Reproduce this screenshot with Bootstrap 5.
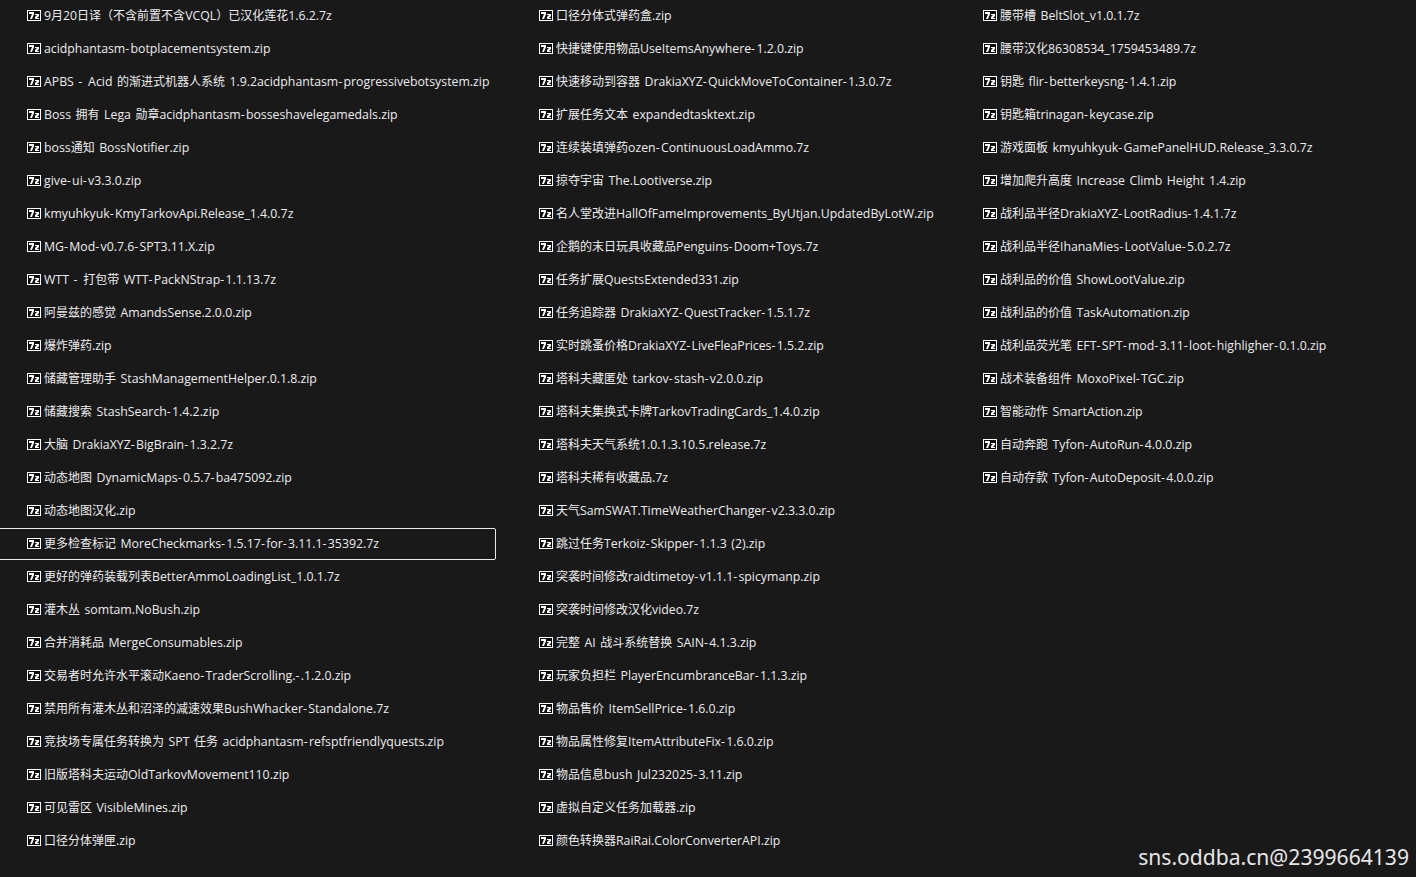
<!DOCTYPE html>
<html lang="zh-CN">
<head>
    <meta charset="UTF-8">
    <title>mods</title>
    <link href="https://cdn.jsdelivr.net/npm/bootstrap@5.3.0/dist/css/bootstrap.min.css" rel="stylesheet">
    <style>
        body{background:#191919;height:877px;overflow:hidden;font-family:"Open Sans","Noto Sans CJK SC",sans-serif;font-size:12.3px;color:#ededed;}
        .file-col-1{width:512px;}
        .file-col-2{width:444px;}
        .file-col-3{width:460px;}
        .file-row{height:33px;padding-left:27px;gap:3px;white-space:nowrap;line-height:1;word-spacing:1.3px;}
        .file-row.sel{margin:0 16px 1px -2px;height:32px;padding:1px 0 0 29px;outline:1px solid #e8e8e8;outline-offset:-1px;border-radius:2px;}
        .cjk-run{font-size:12px;}
        .dash-run{letter-spacing:1.3px;}
        .zip-ico{width:14px;height:11px;flex:none;margin-bottom:2px;}
        .file-row.sel .zip-ico{margin-bottom:3px;}
        .watermark{right:7px;bottom:7px;font-size:21.1px;line-height:1.3;font-family:"Noto Sans",sans-serif;color:#e6e6e6;}
    </style>
</head>
<body class="position-relative">
    <div class="d-flex" id="cols"></div>
    <div class="position-absolute watermark">sns.oddba.cn@2399664139</div>
    <script>
        var c1=["9月20日译（不含前置不含VCQL）已汉化莲花1.6.2.7z","acidphantasm-botplacementsystem.zip","APBS - Acid 的渐进式机器人系统 1.9.2acidphantasm-progressivebotsystem.zip","Boss 拥有 Lega 勋章acidphantasm-bosseshavelegamedals.zip","boss通知 BossNotifier.zip","give-ui-v3.3.0.zip","kmyuhkyuk-KmyTarkovApi.Release_1.4.0.7z","MG-Mod-v0.7.6-SPT3.11.X.zip","WTT - 打包带 WTT-PackNStrap-1.1.13.7z","阿曼兹的感觉 AmandsSense.2.0.0.zip","爆炸弹药.zip","储藏管理助手 StashManagementHelper.0.1.8.zip","储藏搜索 StashSearch-1.4.2.zip","大脑 DrakiaXYZ-BigBrain-1.3.2.7z","动态地图 DynamicMaps-0.5.7-ba475092.zip","动态地图汉化.zip","更多检查标记 MoreCheckmarks-1.5.17-for-3.11.1-35392.7z","更好的弹药装载列表BetterAmmoLoadingList_1.0.1.7z","灌木丛 somtam.NoBush.zip","合并消耗品 MergeConsumables.zip","交易者时允许水平滚动Kaeno-TraderScrolling.-.1.2.0.zip","禁用所有灌木丛和沼泽的减速效果BushWhacker-Standalone.7z","竞技场专属任务转换为 SPT 任务 acidphantasm-refsptfriendlyquests.zip","旧版塔科夫运动OldTarkovMovement110.zip","可见雷区 VisibleMines.zip","口径分体弹匣.zip"];
        var c2=["口径分体式弹药盒.zip","快捷键使用物品UseItemsAnywhere-1.2.0.zip","快速移动到容器 DrakiaXYZ-QuickMoveToContainer-1.3.0.7z","扩展任务文本 expandedtasktext.zip","连续装填弹药ozen-ContinuousLoadAmmo.7z","掠夺宇宙 The.Lootiverse.zip","名人堂改进HallOfFameImprovements_ByUtjan.UpdatedByLotW.zip","企鹅的末日玩具收藏品Penguins-Doom+Toys.7z","任务扩展QuestsExtended331.zip","任务追踪器 DrakiaXYZ-QuestTracker-1.5.1.7z","实时跳蚤价格DrakiaXYZ-LiveFleaPrices-1.5.2.zip","塔科夫藏匿处 tarkov-stash-v2.0.0.zip","塔科夫集换式卡牌TarkovTradingCards_1.4.0.zip","塔科夫天气系统1.0.1.3.10.5.release.7z","塔科夫稀有收藏品.7z","天气SamSWAT.TimeWeatherChanger-v2.3.3.0.zip","跳过任务Terkoiz-Skipper-1.1.3 (2).zip","突袭时间修改raidtimetoy-v1.1.1-spicymanp.zip","突袭时间修改汉化video.7z","完整 AI 战斗系统替换 SAIN-4.1.3.zip","玩家负担栏 PlayerEncumbranceBar-1.1.3.zip","物品售价 ItemSellPrice-1.6.0.zip","物品属性修复ItemAttributeFix-1.6.0.zip","物品信息bush Jul232025-3.11.zip","虚拟自定义任务加载器.zip","颜色转换器RaiRai.ColorConverterAPI.zip"];
        var c3=["腰带槽 BeltSlot_v1.0.1.7z","腰带汉化86308534_1759453489.7z","钥匙 flir-betterkeysng-1.4.1.zip","钥匙箱trinagan-keycase.zip","游戏面板 kmyuhkyuk-GamePanelHUD.Release_3.3.0.7z","增加爬升高度 Increase Climb Height 1.4.zip","战利品半径DrakiaXYZ-LootRadius-1.4.1.7z","战利品半径IhanaMies-LootValue-5.0.2.7z","战利品的价值 ShowLootValue.zip","战利品的价值 TaskAutomation.zip","战利品荧光笔 EFT-SPT-mod-3.11-loot-highligher-0.1.0.zip","战术装备组件 MoxoPixel-TGC.zip","智能动作 SmartAction.zip","自动奔跑 Tyfon-AutoRun-4.0.0.zip","自动存款 Tyfon-AutoDeposit-4.0.0.zip"];
        var ico='<svg class="zip-ico" viewBox="0 0 14 11"><rect width="14" height="11" fill="#fff"/><rect x="1" y="1" width="12" height="9" fill="#0c0c0c"/><path d="M2 2h5v2L5 9H3L5 4H2z" fill="#fff"/><path d="M8 4h4v2l-2 2h2v1H8V7l2-2H8z" fill="#fff"/></svg>';
        var html="";
        [c1,c2,c3].forEach(function(list,i){
            html+='<div class="file-col-'+(i+1)+' flex-shrink-0">';
            list.forEach(function(name,k){
                var sel=(i==0&&k==16)?" sel":"";
                var label=name.replace(/-/g,'<span class="dash-run">-</span>').replace(/[\u3000-\u9fff\uff00-\uffef]+/g,'<span class="cjk-run">$&</span>');
                html+='<div class="file-row d-flex align-items-center'+sel+'">'+ico+'<span>'+label+'</span></div>';
            });
            html+='</div>';
        });
        document.getElementById("cols").innerHTML=html;
    </script>
    <script src="https://cdn.jsdelivr.net/npm/bootstrap@5.3.0/dist/js/bootstrap.bundle.min.js"></script>
</body>
</html>
